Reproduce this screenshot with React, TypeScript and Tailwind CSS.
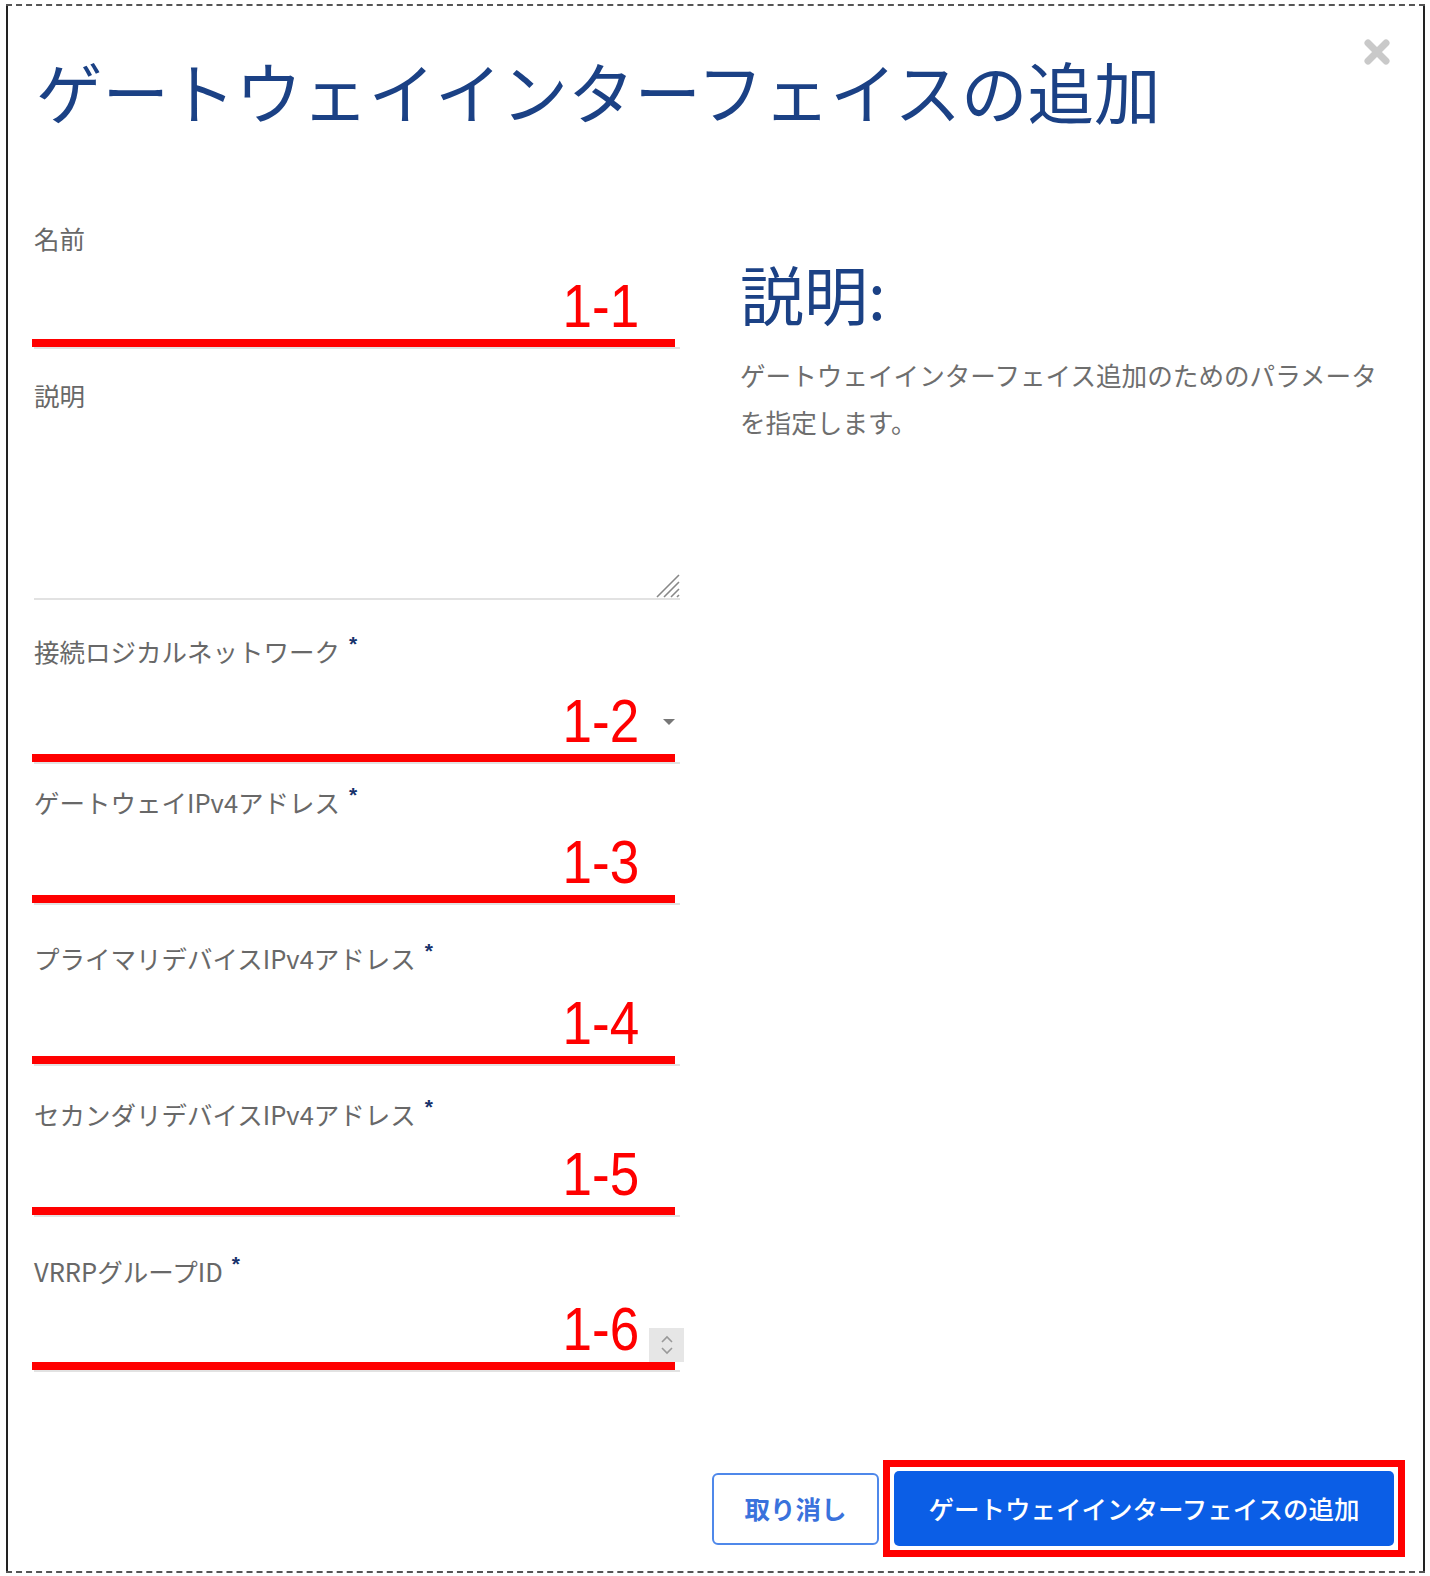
import React from "react";

const jp = "font-['Noto_Sans_CJK_JP','Noto_Sans',sans-serif]";

type Field = {
  label: string;
  required?: boolean;
  note: string;
  kind: "text" | "select" | "number";
  wrap: string;
  box: string;
};

const fields: Field[] = [
  { label: "接続ロジカルネットワーク", required: true, note: "1-2", kind: "select", wrap: "mt-[35px]", box: "h-[97px]" },
  { label: "ゲートウェイIPv4アドレス", required: true, note: "1-3", kind: "text", wrap: "mt-[22px]", box: "h-[87px]" },
  { label: "プライマリデバイスIPv4アドレス", required: true, note: "1-4", kind: "text", wrap: "mt-[37px]", box: "h-[92px]" },
  { label: "セカンダリデバイスIPv4アドレス", required: true, note: "1-5", kind: "text", wrap: "mt-[32px]", box: "h-[87px]" },
  { label: "VRRPグループID", required: true, note: "1-6", kind: "number", wrap: "mt-[38px]", box: "h-[85px]" },
];

const Label = ({ text, required }: { text: string; required?: boolean }) => (
  <div className={`h-[32px] leading-[32px] text-[25.5px] text-[#686868] whitespace-nowrap ${jp}`}>
    {text}
    {required && (
      <span className="relative -top-[11px] ml-[9px] text-[21px] font-bold text-[#17326b] font-['Liberation_Sans',sans-serif]">*</span>
    )}
  </div>
);

const Note = ({ text }: { text: string }) => (
  <>
    <span className="absolute right-[41px] bottom-[10px] origin-right scale-x-87 text-[61px] leading-none text-[#ff0000] font-['Liberation_Sans',sans-serif]">
      {text}
    </span>
    <span className="absolute -left-[2px] bottom-0 h-[8px] w-[643px] bg-[#ff0000]" />
  </>
);

const FormField = ({ f }: { f: Field }) => (
  <div className={f.wrap}>
    <Label text={f.label} required={f.required} />
    <div className={`relative border-b-2 border-[#e2e2e2] ${f.box}`}>
      {f.kind === "select" && (
        <svg className="absolute right-[4px] top-[51px]" width="14" height="8" viewBox="0 0 14 8">
          <path d="M1 1 L13 1 L7 7 Z" fill="#777" />
        </svg>
      )}
      {f.kind === "number" && (
        <div className="absolute -right-[4px] top-[41px] flex h-[34px] w-[35px] flex-col items-center justify-center gap-[4px] bg-[#e6e6e6]">
          <svg width="12" height="8" viewBox="0 0 12 8">
            <path d="M1 7 L6 2 L11 7" fill="none" stroke="#999" strokeWidth="1.6" />
          </svg>
          <svg width="12" height="8" viewBox="0 0 12 8">
            <path d="M1 1 L6 6 L11 1" fill="none" stroke="#999" strokeWidth="1.6" />
          </svg>
        </div>
      )}
      <Note text={f.note} />
    </div>
  </div>
);

export default function App() {
  return (
    <div className="h-[1576px] w-[1430px] bg-white pl-[6px] pt-[4px]">
      <div className="h-[1569px] w-[1419px] border-y-2 border-dashed border-[#555]">
        <div className="relative flex h-full flex-col border-x-2 border-[#222]">
          <button className="absolute right-[32px] top-[32px]">
            <svg width="28" height="28" viewBox="0 0 28 28">
              <path d="M5 5 L23 23 M23 5 L5 23" stroke="#c9c9c9" strokeWidth="7" strokeLinecap="round" />
            </svg>
          </button>

          <h1 className={`mt-[45px] pl-[28px] text-[66.5px] leading-[78px] font-normal text-[#1b4185] whitespace-nowrap ${jp}`}>
            ゲートウェイインターフェイスの追加
          </h1>

          <div className="mt-[93px] grid grid-cols-[646px_1fr] gap-[60px] pl-[26px]">
            <div>
              <div>
                <Label text="名前" />
                <div className="relative h-[95px] border-b-2 border-[#e2e2e2]">
                  <Note text="1-1" />
                </div>
              </div>
              <div className="mt-[30px]">
                <Label text="説明" />
                <div className="relative h-[189px] border-b-2 border-[#e2e2e2]">
                  <svg className="absolute right-0 bottom-0" width="26" height="26" viewBox="0 0 26 26">
                    <path d="M25 3 L3 25 M25 10 L10 25 M25 17 L17 25 M25 23 L23 25" stroke="#888" strokeWidth="1.6" />
                  </svg>
                </div>
              </div>
              {fields.map((f) => (
                <FormField key={f.note} f={f} />
              ))}
            </div>

            <div className="pt-[33px]">
              <div className={`text-[64px] leading-[74px] text-[#1b4185] ${jp}`}>説明:</div>
              <p className={`mt-[22px] w-[652px] text-[25.6px] leading-[47px] text-[#6e6e6e] ${jp}`}>
                ゲートウェイインターフェイス追加のためのパラメータを指定します。
              </p>
            </div>
          </div>

          <div className="mt-auto flex items-center justify-end gap-[4px] pb-[14px] pr-[18px]">
            <button className={`h-[72px] w-[167px] rounded-[6px] border-2 border-[#4f88ea] bg-white text-[25.5px] font-bold text-[#3a72dc] ${jp}`}>
              取り消し
            </button>
            <div className="border-[7px] border-[#ff0000] p-[4px]">
              <button className={`h-[75px] w-[500px] rounded-[5px] bg-[#0b5ee6] text-[25.5px] font-medium text-white ${jp}`}>
                ゲートウェイインターフェイスの追加
              </button>
            </div>
          </div>
        </div>
      </div>
    </div>
  );
}
